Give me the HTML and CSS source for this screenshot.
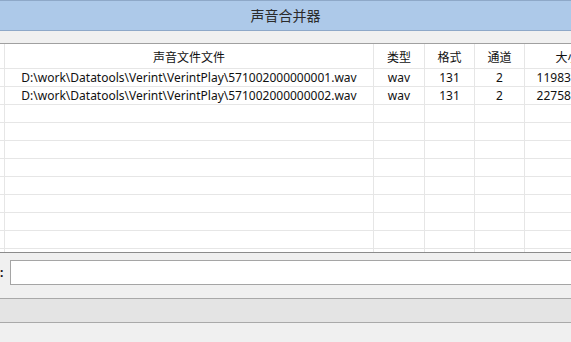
FILE: index.html
```html
<!DOCTYPE html>
<html lang="zh-CN">
<head>
    <meta charset="UTF-8">
    <title>声音合并器</title>
    <link rel="stylesheet" href="styles.css">
</head>
<body>
    <div class="window">
        <div class="titlebar">声音合并器</div>
        <div class="toolbar"></div>

        <div class="grid">
            <div class="row head">
                <div class="cell"></div>
                <div class="cell">声音文件文件</div>
                <div class="cell">类型</div>
                <div class="cell">格式</div>
                <div class="cell">通道</div>
                <div class="cell">大小</div>
            </div>
            <div class="row">
                <div class="cell"></div>
                <div class="cell">D:\work\Datatools\Verint\VerintPlay\571002000000001.wav</div>
                <div class="cell">wav</div>
                <div class="cell">131</div>
                <div class="cell">2</div>
                <div class="cell">119833600</div>
            </div>
            <div class="row">
                <div class="cell"></div>
                <div class="cell">D:\work\Datatools\Verint\VerintPlay\571002000000002.wav</div>
                <div class="cell">wav</div>
                <div class="cell">131</div>
                <div class="cell">2</div>
                <div class="cell">227584000</div>
            </div>
            <div class="row"><div class="cell"></div><div class="cell"></div><div class="cell"></div><div class="cell"></div><div class="cell"></div><div class="cell"></div></div>
            <div class="row"><div class="cell"></div><div class="cell"></div><div class="cell"></div><div class="cell"></div><div class="cell"></div><div class="cell"></div></div>
            <div class="row"><div class="cell"></div><div class="cell"></div><div class="cell"></div><div class="cell"></div><div class="cell"></div><div class="cell"></div></div>
            <div class="row"><div class="cell"></div><div class="cell"></div><div class="cell"></div><div class="cell"></div><div class="cell"></div><div class="cell"></div></div>
            <div class="row"><div class="cell"></div><div class="cell"></div><div class="cell"></div><div class="cell"></div><div class="cell"></div><div class="cell"></div></div>
            <div class="row"><div class="cell"></div><div class="cell"></div><div class="cell"></div><div class="cell"></div><div class="cell"></div><div class="cell"></div></div>
            <div class="row"><div class="cell"></div><div class="cell"></div><div class="cell"></div><div class="cell"></div><div class="cell"></div><div class="cell"></div></div>
            <div class="row"><div class="cell"></div><div class="cell"></div><div class="cell"></div><div class="cell"></div><div class="cell"></div><div class="cell"></div></div>
            <div class="row"><div class="cell"></div><div class="cell"></div><div class="cell"></div><div class="cell"></div><div class="cell"></div><div class="cell"></div></div>
        </div>

        <div class="inputbar">
            <span class="label">:</span>
            <input type="text" class="path-input">
        </div>
        <div class="statusbar"></div>
    </div>
</body>
</html>
```

FILE: styles.css
```css
html, body {
    margin: 0;
    padding: 0;
    background-color: #f0f0f0;
    overflow: hidden;
}
.window {
    width: 571px;
    height: 342px;
    font-family: "Noto Sans", "Noto Sans CJK SC", sans-serif;
    font-size: 12px;
    color: #111;
    overflow: hidden;
}
.titlebar {
    height: 29px;
    line-height: 29px;
    border-top: 1px solid #8ea8c8;
    border-bottom: 1px solid #8ea8c8;
    background-color: #adc9e9;
    text-align: center;
    font-size: 14px;
    color: #2b2b2b;
}
.toolbar {
    height: 12px;
    border-bottom: 1px solid #a0a0a0;
    background-color: #f0f0f0;
}
.grid {
    height: 208px;
    background-color: #fff;
    overflow: hidden;
    border-bottom: 1px solid #8c8c8c;
}
.row {
    display: grid;
    grid-template-columns: 5px 369px 51px 50px 50px 86px;
    height: 18px;
}
.row.head {
    height: 25px;
}
.cell {
    box-sizing: border-box;
    border-right: 1px solid #e6e6e6;
    border-bottom: 1px solid #e6e6e6;
    text-align: center;
    line-height: 17px;
    white-space: nowrap;
    overflow: hidden;
}
.head .cell {
    line-height: 28px;
}
.inputbar {
    display: flex;
    align-items: flex-start;
    height: 46px;
    padding-top: 7px;
    box-sizing: border-box;
    border-bottom: 1px solid #a9a9a9;
}
.label {
    width: 10px;
    line-height: 25px;
    font-weight: bold;
}
.path-input {
    flex: 1;
    height: 25px;
    box-sizing: border-box;
    margin: 0 -4px 0 0;
    padding: 0 4px;
    border: 1px solid #a5a5a5;
    background-color: #fff;
    font: inherit;
    outline: none;
}
.statusbar {
    height: 23px;
    background-color: #e4e4e4;
    border-bottom: 1px solid #a9a9a9;
}
```
